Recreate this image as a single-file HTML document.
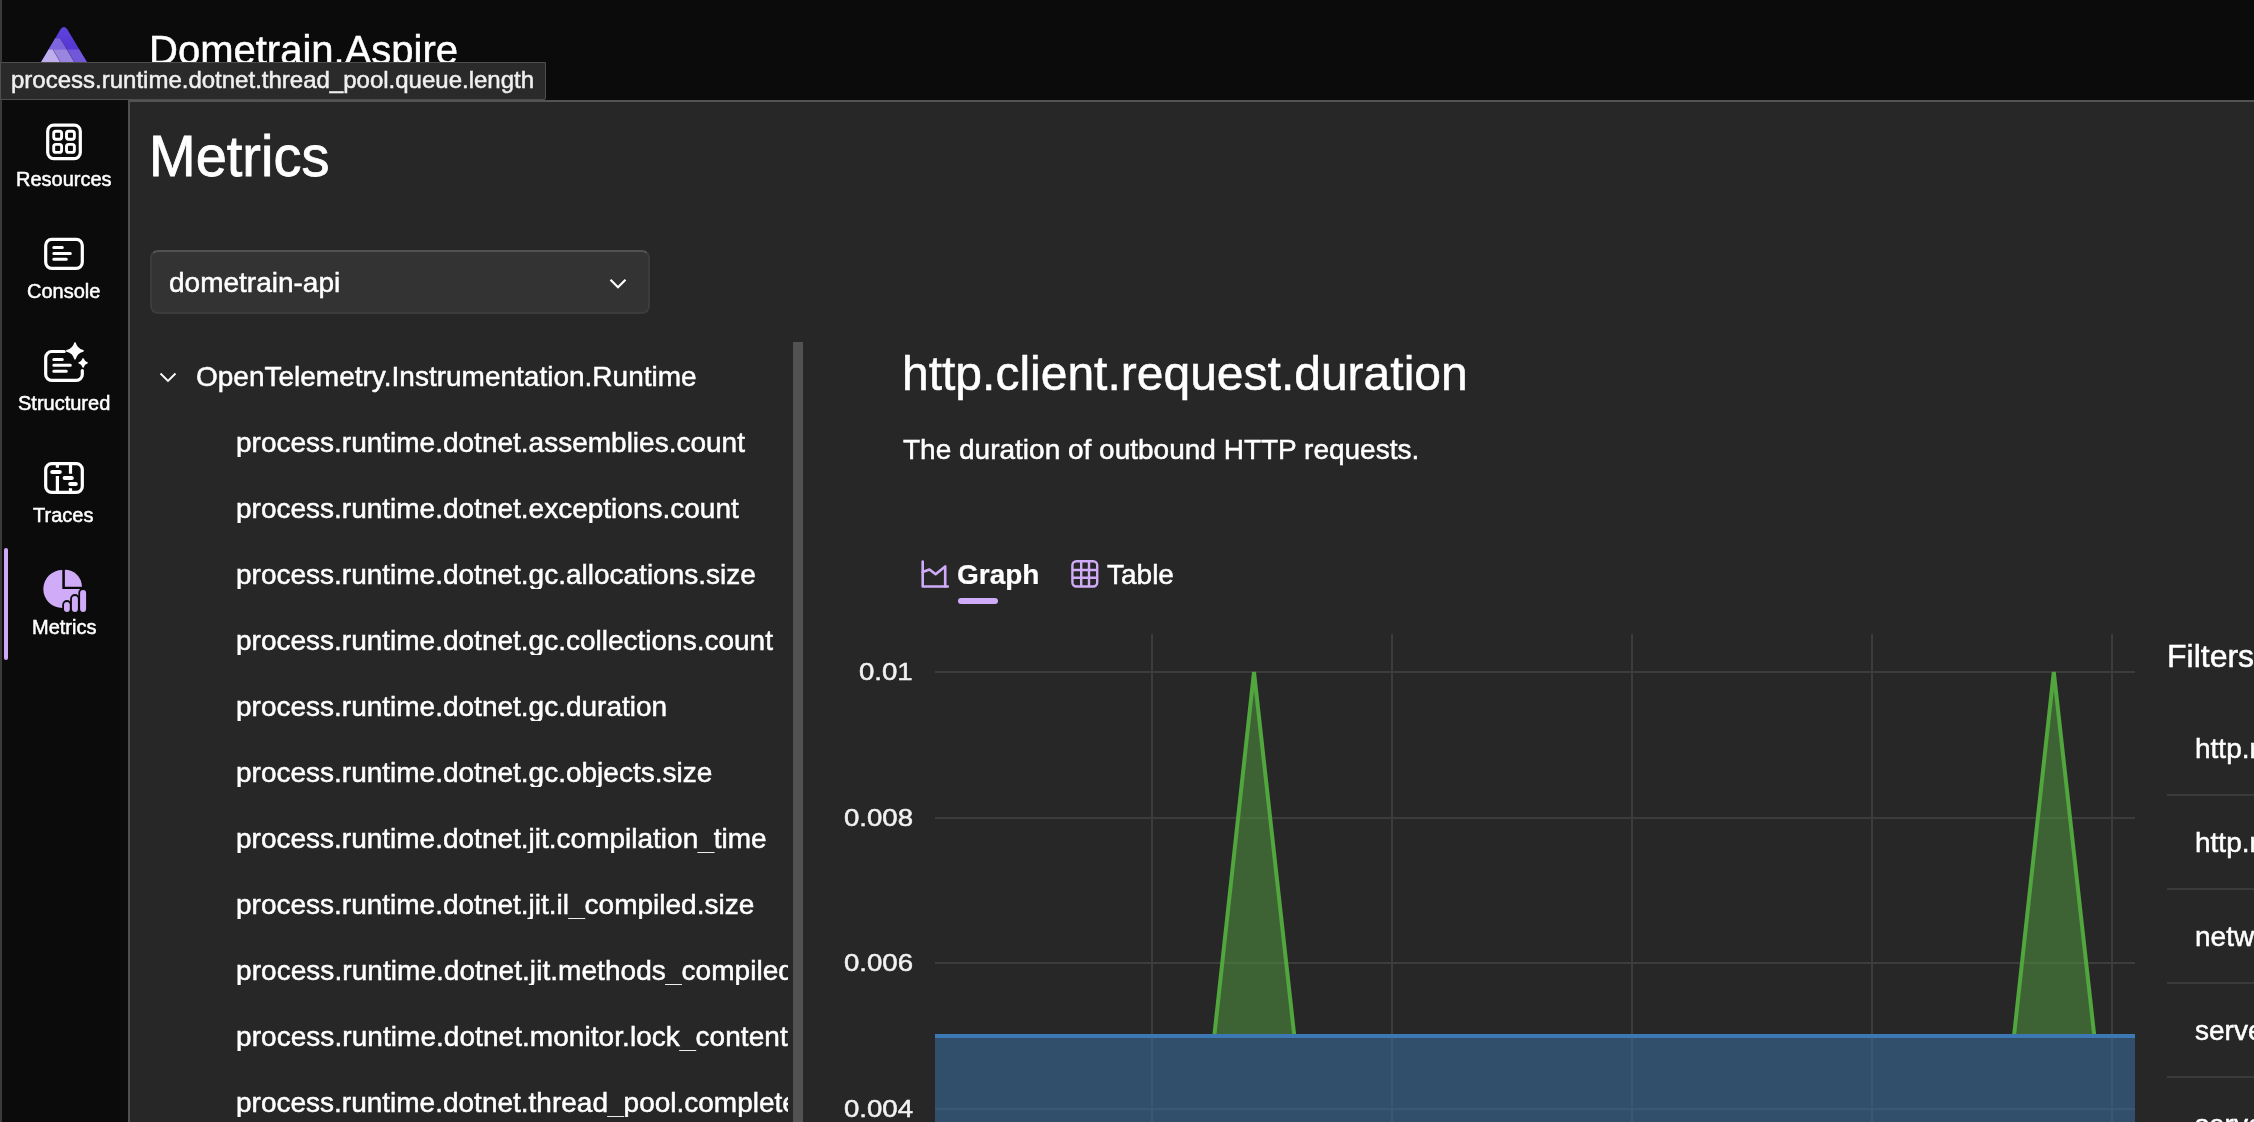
<!DOCTYPE html>
<html><head><meta charset="utf-8">
<style>
*{box-sizing:border-box}
html,body{margin:0;padding:0}
body{width:2254px;height:1122px;overflow:hidden;position:relative;background:#0b0b0b;font-family:"Liberation Sans",sans-serif;color:#fff}
.a{position:absolute;white-space:nowrap;line-height:1;will-change:transform;-webkit-text-stroke:0.5px currentColor}
#lb{position:absolute;left:0;top:0;width:2px;height:1122px;background:#3b3b3b;z-index:5}
#main{position:absolute;left:128px;top:100px;width:2200px;height:1100px;background:#272727;border-top:2px solid #535353;border-left:2px solid #4f4f4f}
.t{}
.nl{font-size:20px}
.tr{left:236px;margin-top:1px;font-size:28px;width:552px;overflow:hidden}
.fr{left:2195px;font-size:28px}
.yl{font-size:24px;transform:scaleX(1.15);transform-origin:100% 50%;right:1341px;text-align:right;color:#f2f2f2}
</style></head>
<body>
<div id="lb"></div>

<svg class="a" style="left:30px;top:20px" width="70" height="50" viewBox="30 20 70 50">
 <defs>
  <linearGradient id="g1" x1="0" y1="0" x2="0" y2="1"><stop offset="0" stop-color="#6043dc"/><stop offset="1" stop-color="#4c2ecf"/></linearGradient>
 </defs>
 <path d="M60.7 29Q63.9 25.2 67.1 29L88.1 64H39.9Z" fill="url(#g1)"/>
 <path d="M55 38.5H60.4L67.1 49.7H48.4Z" fill="#7d66de"/>
 <path d="M48.6 49.4H53L61.5 64H39.9Z" fill="#bfb0ed"/>
 <path d="M52.8 49.4H67.1L75.6 64H61.3Z" fill="#9a86e1"/>
 <path d="M66.9 49.4H79.2L88.1 64H75.4Z" fill="#7258d9"/>
 <path d="M60.4 38.5L67.1 49.7L75.6 64M53 49.7L61.5 64" stroke="#1d1640" stroke-width="0.5" fill="none" opacity="0.6"/>
</svg>
<div class="a t" style="left:149px;top:30px;font-size:40px">Dometrain.Aspire</div>

<div id="main"></div>

<div class="a" style="left:4px;top:548px;width:4px;height:112px;border-radius:2px;background:#cfa9f6"></div>

<svg class="a" style="left:0;top:100px" width="128" height="600" viewBox="0 100 128 600">
 <g fill="none" stroke="#fff" stroke-width="3.2">
  <rect x="47.7" y="125.2" width="32.6" height="33.4" rx="6"/>
  <rect x="53.7" y="131.2" width="7.9" height="8" rx="2.2" stroke-width="2.9"/>
  <rect x="66.5" y="131.2" width="7.9" height="8" rx="2.2" stroke-width="2.9"/>
  <rect x="53.7" y="144.4" width="7.9" height="8" rx="2.2" stroke-width="2.9"/>
  <rect x="66.5" y="144.4" width="7.9" height="8" rx="2.2" stroke-width="2.9"/>
 </g>
 <g fill="none" stroke="#fff" stroke-width="3.2" stroke-linecap="round">
  <rect x="45.7" y="239.4" width="36.6" height="28.9" rx="6"/>
  <path d="M53.8 247.5H62.3M53.8 253.5H70.3M53.8 259.3H66.3" stroke-width="3"/>
 </g>
 <g fill="none" stroke="#fff" stroke-width="3.2" stroke-linecap="round">
  <path d="M64.2 351.5H51.7A6 6 0 0 0 45.7 357.5V374.4A6 6 0 0 0 51.7 380.4H76.3A6 6 0 0 0 82.3 374.4V370.6"/>
  <path d="M53.8 359.5H62.3M53.8 365.3H70.3M53.8 371.3H66.3" stroke-width="3"/>
 </g>
 <g fill="#fff">
  <path d="M75 343Q76.6 349.3 83 350.9Q76.6 352.5 75 358.8Q73.4 352.5 66.8 350.9Q73.4 349.3 75 343Z" stroke="#fff" stroke-width="1.6" stroke-linejoin="round"/>
  <path d="M83.1 358.8Q84 362 87.2 362.9Q84 363.8 83.1 367Q82.2 363.8 79 362.9Q82.2 362 83.1 358.8Z" stroke="#fff" stroke-width="1.4" stroke-linejoin="round"/>
 </g>
 <g fill="none" stroke="#fff" stroke-width="3.2">
  <rect x="45.7" y="463.6" width="36.6" height="28.8" rx="6"/>
  <path d="M57.4 463.6V492.4M70.5 463.6V492.4"/>
 </g>
 <g fill="#fff" stroke="#0b0b0b" stroke-width="2.2">
  <rect x="49.1" y="468.8" width="13.8" height="6.2" rx="3.1"/>
  <rect x="61.5" y="474.8" width="13.4" height="6.2" rx="3.1"/>
  <rect x="67.1" y="481" width="11.8" height="6.2" rx="3.1"/>
 </g>
 <g fill="#d0acf8">
  <path d="M62.3 570A19 19 0 1 0 81.3 589H62.3Z"/>
  <path d="M64.9 569.8V586.8H82A17.1 17.1 0 0 0 64.9 569.8Z"/>
 </g>
 <g fill="#d0acf8" stroke="#0b0b0b" stroke-width="1.8">
  <rect x="63.1" y="601" width="7.6" height="12" rx="3.8"/>
  <rect x="71" y="595" width="7.8" height="18" rx="3.9"/>
  <rect x="79.2" y="589" width="7.8" height="24" rx="3.9"/>
 </g>
</svg>
<div class="a nl t" style="left:16px;top:169px">Resources</div>
<div class="a nl t" style="left:27px;top:281px">Console</div>
<div class="a nl t" style="left:18px;top:393px">Structured</div>
<div class="a nl t" style="left:33px;top:505px">Traces</div>
<div class="a nl t" style="left:32px;top:617px">Metrics</div>

<div class="a t" style="left:149px;top:129px;font-size:56px;transform:scaleY(1.03);transform-origin:0 47px;-webkit-text-stroke:0.8px #fff">Metrics</div>

<div class="a" style="left:150px;top:250px;width:500px;height:64px;border-radius:8px;background:#333333;border:2px solid #3c3c3c;border-top-color:#525252"></div>
<div class="a t" style="left:169px;top:269px;font-size:28px">dometrain-api</div>
<svg class="a" style="left:600px;top:270px" width="40" height="30" viewBox="600 270 40 30"><path d="M610.5 279.8L618 287.2L625.5 279.8" fill="none" stroke="#fff" stroke-width="2.2"/></svg>

<svg class="a" style="left:150px;top:360px" width="40" height="30" viewBox="150 360 40 30"><path d="M160.5 373.5L168 381L175.5 373.5" fill="none" stroke="#fff" stroke-width="1.8"/></svg>
<div class="a t" style="left:196px;top:363px;font-size:28px">OpenTelemetry.Instrumentation.Runtime</div>
<div class="a tr t" style="top:428px">process.runtime.dotnet.assemblies.count</div>
<div class="a tr t" style="top:494px">process.runtime.dotnet.exceptions.count</div>
<div class="a tr t" style="top:560px">process.runtime.dotnet.gc.allocations.size</div>
<div class="a tr t" style="top:626px">process.runtime.dotnet.gc.collections.count</div>
<div class="a tr t" style="top:692px">process.runtime.dotnet.gc.duration</div>
<div class="a tr t" style="top:758px">process.runtime.dotnet.gc.objects.size</div>
<div class="a tr t" style="top:824px">process.runtime.dotnet.jit.compilation_time</div>
<div class="a tr t" style="top:890px">process.runtime.dotnet.jit.il_compiled.size</div>
<div class="a tr t" style="top:956px;letter-spacing:0.055px">process.runtime.dotnet.jit.methods_compiled.count</div>
<div class="a tr t" style="top:1022px;letter-spacing:0.055px">process.runtime.dotnet.monitor.lock_contention.count</div>
<div class="a tr t" style="top:1088px">process.runtime.dotnet.thread_pool.completed_items.count</div>
<div class="a" style="left:793px;top:342px;width:10px;height:800px;background:#525252"></div>

<div class="a t" style="left:902px;top:350px;font-size:48px">http.client.request.duration</div>
<div class="a t" style="left:903px;top:436px;font-size:28px">The duration of outbound HTTP requests.</div>

<svg class="a" style="left:915px;top:555px" width="40" height="40" viewBox="915 555 40 40" fill="none" stroke="#d0acf8" stroke-width="2.6" stroke-linejoin="round" stroke-linecap="round">
 <path d="M922.7 561.6V586.5H947.8"/>
 <path d="M922.7 572L929.5 569.5L935.6 574.2L945.2 566.4V586.5"/>
</svg>
<div class="a t" style="left:957px;top:561px;font-size:28px;font-weight:700;-webkit-text-stroke:0.2px #fff">Graph</div>
<div class="a" style="left:958px;top:598px;width:40px;height:6px;border-radius:3px;background:#d0acf8"></div>
<svg class="a" style="left:1065px;top:555px" width="40" height="40" viewBox="1065 555 40 40" fill="none" stroke="#d0acf8" stroke-width="2.4">
 <rect x="1072.4" y="561.2" width="24.8" height="25.3" rx="4"/>
 <path d="M1081.2 561.2V586.5M1089 561.2V586.5M1072.4 570H1097.2M1072.4 577.8H1097.2"/>
</svg>
<div class="a t" style="left:1107px;top:561px;font-size:28px">Table</div>

<svg class="a" style="left:820px;top:620px" width="1340" height="502" viewBox="820 620 1340 502">
<line x1="935" x2="2135" y1="672" y2="672" stroke="#3c3c3c" stroke-width="2"/>
<line x1="935" x2="2135" y1="818" y2="818" stroke="#3c3c3c" stroke-width="2"/>
<line x1="935" x2="2135" y1="963" y2="963" stroke="#3c3c3c" stroke-width="2"/>
<line x1="935" x2="2135" y1="1109" y2="1109" stroke="#3c3c3c" stroke-width="2"/>
<line x1="1152" x2="1152" y1="634" y2="1122" stroke="#3c3c3c" stroke-width="2"/>
<line x1="1392" x2="1392" y1="634" y2="1122" stroke="#3c3c3c" stroke-width="2"/>
<line x1="1632" x2="1632" y1="634" y2="1122" stroke="#3c3c3c" stroke-width="2"/>
<line x1="1872" x2="1872" y1="634" y2="1122" stroke="#3c3c3c" stroke-width="2"/>
<line x1="2112" x2="2112" y1="634" y2="1122" stroke="#3c3c3c" stroke-width="2"/>
<path d="M1214.3 1036L1254 672L1294.3 1036Z" fill="#4c8a3c" fill-opacity="0.6" stroke="#52a63e" stroke-width="4" stroke-linejoin="miter"/>
<path d="M2014 1036L2053.8 672L2094.3 1036Z" fill="#4c8a3c" fill-opacity="0.6" stroke="#52a63e" stroke-width="4" stroke-linejoin="miter"/>
<rect x="935" y="1036" width="1200" height="90" fill="#386a99" fill-opacity="0.6"/>
<line x1="935" x2="2135" y1="1036" y2="1036" stroke="#3c78b4" stroke-width="4"/>
</svg>
<div class="a yl" style="top:660px">0.01</div>
<div class="a yl" style="top:806px">0.008</div>
<div class="a yl" style="top:951px">0.006</div>
<div class="a yl" style="top:1097px">0.004</div>

<div class="a t" style="left:2167px;top:640px;font-size:32px">Filters</div>
<div class="a fr t" style="top:735px">http.request.method</div>
<div class="a fr t" style="top:829px">http.response.status_code</div>
<div class="a fr t" style="top:923px">network.protocol.version</div>
<div class="a fr t" style="top:1017px">server.address</div>
<div class="a fr t" style="top:1111px">server.port</div>
<div class="a" style="left:2167px;top:794px;width:100px;height:2px;background:#3a3a3a"></div>
<div class="a" style="left:2167px;top:888px;width:100px;height:2px;background:#3a3a3a"></div>
<div class="a" style="left:2167px;top:982px;width:100px;height:2px;background:#3a3a3a"></div>
<div class="a" style="left:2167px;top:1076px;width:100px;height:2px;background:#3a3a3a"></div>
<div class="a" style="left:2167px;top:1170px;width:100px;height:2px;background:#3a3a3a"></div>

<div class="a" style="left:0;top:62px;width:546px;height:38px;background:#2a2a2a;border:1px solid #4e4e4e;border-radius:0 0 2px 0;z-index:10"></div>
<div class="a t" style="left:11px;top:68px;font-size:24px;color:#f0f0f0;z-index:11">process.runtime.dotnet.thread_pool.queue.length</div>
</body></html>
